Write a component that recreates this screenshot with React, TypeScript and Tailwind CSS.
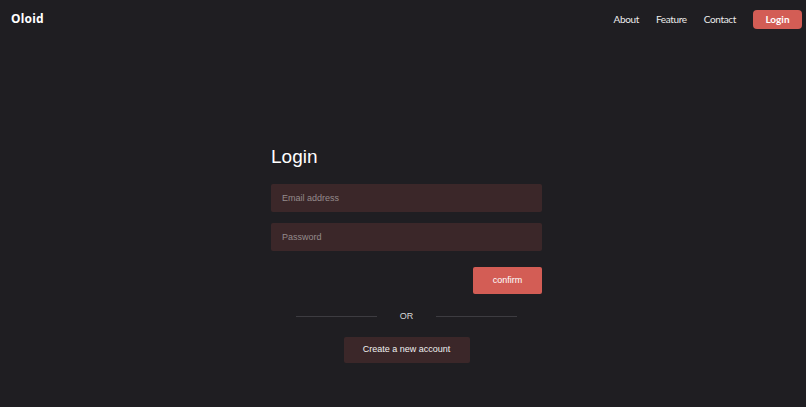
import React from 'react';

export default function App() {
  const navLinks = ['About', 'Feature', 'Contact'];

  return (
    <div className="min-h-[407px] h-screen bg-[#1f1e22] font-['Liberation_Sans',Arial,sans-serif] text-[#ececec]">
      {/* Header */}
      <header className="h-[38px] flex items-center justify-between pl-[11px] pr-[4px]">
        <div className="font-['Noto_Sans','Open_Sans',sans-serif] text-[12px] font-bold text-white tracking-[0.2px]">Oloid</div>
        <nav className="flex items-center gap-[17px] font-['Lato','Noto_Sans',sans-serif] text-[#ececec]">
          {navLinks.map((link) => (
            <a key={link} href="#" className="leading-none text-[10px] tracking-[-0.35px]">
              {link}
            </a>
          ))}
          <button className="h-[19px] w-[49px] rounded-[4px] bg-[#d35d55] text-[10px] font-bold text-white leading-none">
            Login
          </button>
        </nav>
      </header>

      {/* Login form */}
      <main className="flex justify-center pl-[7px] pt-[108px]">
        <div className="w-[271px] flex flex-col">
          <h1 className="text-[19px] leading-[22px] text-white">Login</h1>

          <input
            type="email"
            placeholder="Email address"
            className="mt-[16px] h-[28px] w-full rounded-[2px] bg-[#3b2729] px-[11px] text-[9px] text-white placeholder:text-[#958b8c] outline-none"
          />
          <input
            type="password"
            placeholder="Password"
            className="mt-[11px] h-[28px] w-full rounded-[2px] bg-[#3b2729] px-[11px] text-[9px] text-white placeholder:text-[#958b8c] outline-none"
          />

          <div className="mt-[16px] flex justify-end">
            <button className="h-[27px] w-[69px] rounded-[2px] bg-[#d35d55] text-[9px] text-white">
              confirm
            </button>
          </div>

          {/* Divider */}
          <div className="mt-[15px] flex items-center justify-center">
            <div className="h-px w-[81px] bg-[#3d3c41]" />
            <span className="mx-[23px] text-[9px] leading-[14px] text-[#d8d8d8]">OR</span>
            <div className="h-px w-[81px] bg-[#3d3c41]" />
          </div>

          <div className="mt-[14px] flex justify-center">
            <button className="h-[26px] w-[126px] rounded-[2px] bg-[#3b2729] text-[9px] text-[#f0f0f0]">
              Create a new account
            </button>
          </div>
        </div>
      </main>
    </div>
  );
}
